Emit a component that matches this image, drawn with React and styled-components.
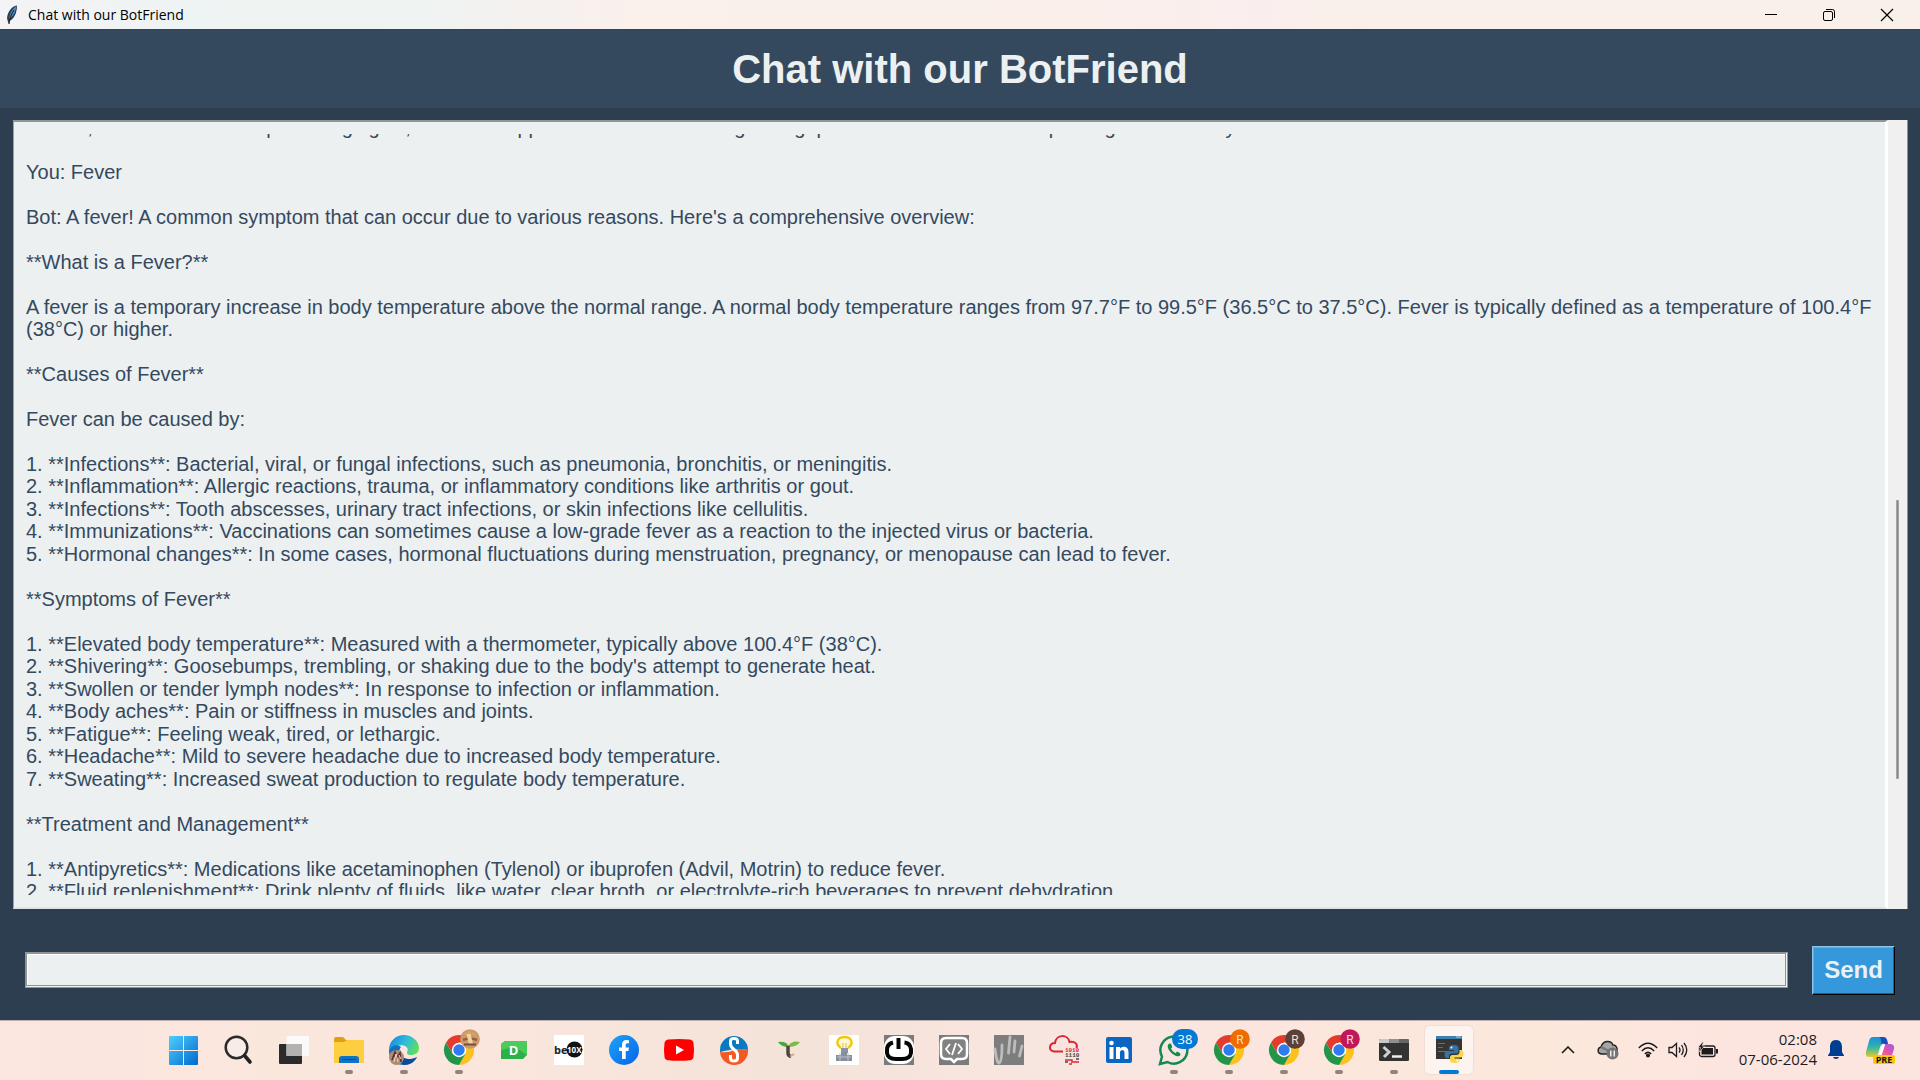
import React, { useLayoutEffect, useRef } from "react";
import styled, { createGlobalStyle, css } from "styled-components";

const GlobalStyle = createGlobalStyle`
  *, *::before, *::after { box-sizing: border-box; }
  body { margin: 0; background: #2c3e50; }
  button { border: 0; padding: 0; background: none; font: inherit; color: inherit; }
`;

const ui = '"Open Sans", "Noto Sans", sans-serif';
const arial = '"Liberation Sans", Arial, sans-serif';

const Desktop = styled.div`
  display: flex;
  flex-direction: column;
  height: 100vh;
  background: #2c3e50;
  font-family: ${arial};
`;

const TitleBar = styled.header`
  display: flex;
  align-items: center;
  height: 29px;
  flex: none;
  padding: 0 4px 0 6px;
  background: linear-gradient(90deg, #f4f3f5 0%, #eef3f3 10%, #eff3f2 22%, #faf0ec 33%, #faf0ea 52%, #faeeee 64%, #f9f0ea 72%, #f9f0ea 100%);
  color: #000;
  font-family: ${ui};
  font-size: 14px;
`;

const WindowName = styled.span`
  flex: 1;
  margin-left: 10px;
`;

const WindowButton = styled.button`
  display: grid;
  place-items: center;
  width: 58px;
  height: 29px;
`;

const Banner = styled.div`
  display: grid;
  place-items: center;
  flex: none;
  height: 79px;
  background: #34495e;
  border-top: 1px solid #2f4657;
`;

const BannerTitle = styled.h1`
  margin: 0;
  color: #ecf0f1;
  font-size: 40px;
  line-height: 46px;
  font-weight: bold;
`;

const ChatFrame = styled.main`
  display: flex;
  flex: 1;
  min-height: 0;
  margin: 12px 12px 0 13px;
  background: #ecf0f1;
`;

const ChatPane = styled.section`
  flex: 1;
  min-width: 0;
  padding: 12px;
  border: 2px solid #fff;
  border-width: 2px 3px 2px 1px;
  border-color: #8f9698 #fff #dfe3e4 #a0a0a0;
`;

const Log = styled.div`
  height: 100%;
  overflow-y: auto;
  scrollbar-width: none;
  color: #34495e;
  font-size: 20px;
  line-height: 22px;
`;

const Message = styled.p`
  margin: 0 0 23px;
`;

const List = styled.ul`
  margin: 0 0 23px;
  padding: 0;
  list-style: none;

  li:nth-child(even) { line-height: 23px; }
`;

const ScrollTrack = styled.div`
  display: flex;
  flex-direction: column;
  align-items: center;
  width: 20px;
  background: #f0f0f0;
  border-right: 1px solid #8a949c;

  &::before { content: ""; flex: 381; }
  &::after { content: ""; flex: 130; }
`;

const ScrollThumb = styled.div`
  flex: 278;
  width: 3px;
  border: 1px solid #a6a6a6;
  background: #858585;
`;

const Composer = styled.form`
  display: flex;
  align-items: center;
  gap: 24px;
  flex: none;
  padding: 37px 25px 25px;
`;

const MessageInput = styled.input`
  flex: 1;
  min-width: 0;
  height: 36px;
  margin-bottom: 2px;
  padding: 0 4px;
  border: 3px double #8f9496;
  border-width: 2px 3px 3px 2px;
  border-style: solid double double solid;
  border-radius: 0;
  background: #ecf0f1;
  color: #34495e;
  font-family: ${arial};
  font-size: 20px;
  outline: 0;
  box-shadow: inset 1px 1px 0 #fff;
`;

const SendButton = styled.button`
  width: 83px;
  height: 49px;
  padding-bottom: 2px;
  background: #3498db;
  border: 1px solid #000;
  border-color: #8cc4ec #000 #000 #8cc4ec;
  box-shadow: inset -1px -1px 0 #20608c, inset 1px 1px 0 #5bade3;
  color: #ecf0f1;
  font-family: ${arial};
  font-size: 24px;
  font-weight: bold;
`;

const Taskbar = styled.footer`
  display: flex;
  align-items: center;
  justify-content: space-between;
  flex: none;
  height: 60px;
  padding: 0 15px 2px 160px;
  border-top: 1px solid #bfb0ad;
  background: linear-gradient(90deg, #fbe6e0 0%, #fae7dc 15%, #fae6dd 25%, #f4e3d9 42%, #f7e5de 50%, #f9e5e1 60%, #fce6dd 68%, #fbe8db 80%, #fde5df 90%, #fde5df 100%);
  color: #1c1c1c;
  font-family: ${ui};
`;

const Apps = styled.nav`
  display: flex;
`;

const AppButton = styled.button`
  display: flex;
  flex-direction: column;
  align-items: center;
  width: 48px;
  height: 48px;
  margin-right: 7px;
  padding: 9px 0 0;
  border-radius: 5px;
  ${(p) => p.$active && css`background: #fdf4f0; box-shadow: 0 0 1px 1px #f0dfd8;`}

  svg { flex: none; overflow: visible; }

  &::after {
    content: "";
    width: ${(p) => (p.$active ? 20 : 8)}px;
    height: 4px;
    margin-top: 5px;
    border-radius: 2px;
    background: ${(p) => (p.$active ? "#0078d4" : p.$running ? "#8f8580" : "transparent")};
  }
`;

const Tray = styled.div`
  display: flex;
  align-items: center;
`;

const TrayButton = styled.button`
  display: grid;
  place-items: center;
  width: ${(p) => p.$w}px;
  height: 48px;
`;

const Clock = styled.time`
  width: 89px;
  padding-bottom: 2px;
  text-align: right;
  font-size: 15px;
  line-height: 20px;
`;

const Feather = () => (
  <svg width="12" height="20" viewBox="0 0 12 20">
    <path d="M11 .5C7 1 2 5 1 13l1 4 1 2 .5-3C8 14 11 8 11 .5Z" fill="#2d3b4a" />
    <path d="M10.500 1C7 3 4 7 3 14 7 12 9.500 7 10.500 1Z" fill="#4d8cc7" />
    <path d="M8 5C6 8 4 12 3 19" stroke="#0c1520" fill="none" />
  </svg>
);

const Pic = ({ children }) => (
  <svg width="30" height="30" viewBox="0 0 30 30" aria-hidden="true">{children}</svg>
);

const StartIcon = () => (
  <Pic>
    <defs>
      <linearGradient id="win" x1="0" y1="0" x2="30" y2="30" gradientUnits="userSpaceOnUse">
        <stop offset="0" stopColor="#4fd0ff" />
        <stop offset="1" stopColor="#0067cc" />
      </linearGradient>
    </defs>
    <path fill="url(#win)" d="M1 1H14V15H0V2A1 1 0 0 1 1 1ZM15 1H28A1 1 0 0 1 29 2V15H15ZM0 16H14V30H1A1 1 0 0 1 0 29ZM15 16H29V29A1 1 0 0 1 28 30H15Z" />
  </Pic>
);

const SearchIcon = () => (
  <Pic>
    <circle cx="12.500" cy="12.500" r="10.800" fill="#f8ece6" stroke="#2b2b2b" strokeWidth="2.500" />
    <path d="M20.500 20.500L26 27" stroke="#222" strokeWidth="3.600" strokeLinecap="round" />
  </Pic>
);

const TaskViewIcon = () => (
  <Pic>
    <rect x="0" y="9" width="23" height="20" rx="1" fill="#2b2b2b" />
    <rect x="7.500" y="1" width="22.500" height="20" rx="1" fill="#fbfafa" opacity=".96" />
    <rect x="7.500" y="9" width="15.500" height="12" fill="#b4b2b1" />
  </Pic>
);

const FolderIcon = () => (
  <Pic>
    <path d="M0 4A2 2 0 0 1 2 2H9L12 5H28A2 2 0 0 1 30 7V12H0Z" fill="#e0a010" />
    <path d="M0 7H10L13 5H28A2 2 0 0 1 30 7V28H0Z" fill="#fdce3f" />
    <path d="M5 28V24A3 3 0 0 1 8 21H22A3 3 0 0 1 25 24V28Z" fill="#0f73c6" />
    <path d="M8.500 24.500H21.500" stroke="#0a4a86" />
  </Pic>
);

const EdgeIcon = () => (
  <Pic>
    <defs>
      <linearGradient id="edge" x1="0" x2="1" y1=".2" y2=".6">
        <stop offset="0" stopColor="#1b86d6" />
        <stop offset=".5" stopColor="#2cbbe0" />
        <stop offset="1" stopColor="#5fe05a" />
      </linearGradient>
    </defs>
    <path d="M0 15C0 6 7 0 15 0S30 6 30 13C30 18 26 20 22 20 18 20 17.500 18 18.500 16 20 12 14 9 9 11 4 12 0 16 0 20Z" fill="url(#edge)" />
    <path d="M0 16C2 10 8 9 12 12 10 14 9 20 14 24 19 27.500 25 25 28 22 26 27 21 30 15 30 6 30 0 24 0 16Z" fill="#1470c0" />
    <path d="M12 15C11 22 17 27 28 22 25 27 20 30 15 30 10 28 8 20 12 15Z" fill="#0d4c94" />
    <circle cx="7.500" cy="22.500" r="7.500" fill="#b08a72" />
    <path d="M3 25L6 17 8 23 11 18 12 27M4 21H11" stroke="#5c2a3c" strokeWidth="1.500" fill="none" />
    <path d="M5 27L7 19 9 27M10 20L12 24" stroke="#f4e2b4" fill="none" />
  </Pic>
);

const ChromeIcon = ({ badge, letter }) => (
  <Pic>
    <path d="M2 7.500A15 15 0 0 1 28 7.500H15L8.500 18.750Z" fill="#e33b2e" />
    <path d="M28 7.500A15 15 0 0 1 15 30L21.500 18.750 15 7.500Z" fill="#fcc21b" />
    <path d="M15 30A15 15 0 0 1 2 7.500L8.500 18.750H21.500Z" fill="#239549" />
    <circle cx="15" cy="15" r="7.200" fill="#fff" />
    <circle cx="15" cy="15" r="5.700" fill="#2f7bf0" />
    <circle cx="26" cy="4" r="9.800" fill={badge} />
    {letter ? (
      <text x="26" y="8.500" textAnchor="middle" fontSize="12" fontFamily="Roboto, sans-serif" fill="#f3dfd2">{letter}</text>
    ) : (
      <g fill="none">
        <path d="M19 5Q26 2 33 5" stroke="#a05c38" strokeWidth="2.500" />
        <path d="M24-3L27 9" stroke="#efd3a0" strokeWidth="4" />
        <path d="M20-1Q26-4 32 0" stroke="#d6a25c" strokeWidth="2" />
        <path d="M20 9.500H32" stroke="#7d4c38" strokeWidth="2" />
      </g>
    )}
  </Pic>
);

const DIcon = () => (
  <Pic>
    <path d="M2 9L6 6H28V20L24 24H2Z" fill="#2cb14a" />
    <path d="M6 6H28V20L16 12 2 15V9Z" fill="#4acb5c" />
    <text x="14.500" y="19.500" textAnchor="middle" fontSize="13" fontWeight="bold" fontFamily="Open Sans, sans-serif" fill="#fff">D</text>
  </Pic>
);

const BeTenIcon = () => (
  <Pic>
    <rect width="30" height="30" fill="#fff" />
    <circle cx="20.500" cy="14.500" r="8" fill="#111" />
    <text x="0" y="18.500" fontSize="11" fontWeight="bold" fontFamily="Open Sans, sans-serif" fill="#222">be</text>
    <text x="13" y="18" fontSize="8" fontWeight="bold" fontFamily="Open Sans, sans-serif" fill="#fff">10X</text>
  </Pic>
);

const FacebookIcon = () => (
  <Pic>
    <defs>
      <linearGradient id="fb" x1="0" x2="1" y1="0" y2="1">
        <stop offset="0" stopColor="#1aa5fb" />
        <stop offset="1" stopColor="#0763e6" />
      </linearGradient>
    </defs>
    <circle cx="15" cy="15" r="15" fill="url(#fb)" />
    <path d="M13 24V16H10V12.500H13V10C13 6.500 15 5 17.500 5L20 5.200V8.300H18.500C17 8.300 16.700 9 16.700 10V12.500H20L19.400 16H16.700V24Z" fill="#fff" />
  </Pic>
);

const YouTubeIcon = () => (
  <Pic>
    <path d="M4 4.500Q15 3.500 26 4.500 29 5 29.500 8 30.500 15 29.500 22 29 25 26 25.300 15 26.300 4 25.300 1 25 .5 22-.5 15 .5 8 1 5 4 4.500Z" fill="#f00" />
    <path d="M12 10.500V19.500L20 15Z" fill="#fff" />
  </Pic>
);

const SIcon = () => (
  <Pic>
    <path d="M1 15A14 14 0 0 1 29 15Q20 12 1 17Z" fill="#0a79c0" />
    <path d="M1 17Q10 18 15 15 22 13 29 15A14 14 0 0 1 1 17Z" fill="#f15a24" />
    <path d="M18.500 9V6Q18.500 3.500 15 3.500T11.500 6V9Q11.500 12 15 14.500 18.500 17 18.500 20V23Q18.500 26 15 26T11.500 23V20" fill="none" stroke="#fff" strokeWidth="3" />
  </Pic>
);

const SproutIcon = () => (
  <Pic>
    <path d="M15 12Q13 6 4 7 7 12 15 12Z" fill="#45a842" />
    <path d="M14 11Q18 5 26 7 23 12 14 12Z" fill="#7dbb45" />
    <path d="M14 11V18Q14 21 17 21.500" stroke="#4d443f" strokeWidth="3.500" fill="none" />
    <path d="M16 21.500L20 19" stroke="#e0a070" strokeWidth="2" />
  </Pic>
);

const BulbIcon = () => (
  <Pic>
    <rect width="30" height="30" fill="#fff" />
    <path d="M12 13C6 9 8 2 15.500 2S25 9 19 13" fill="#fff8d0" stroke="#f0c818" strokeWidth="2.500" />
    <path d="M14 16V8M17 16V8" stroke="#d5bd60" />
    <rect x="12" y="13" width="7" height="5" fill="#8b93a2" />
    <path d="M7 20H12V17H18V20H23V26H7Z" fill="#878e9b" />
    <path d="M8 22H22M11 18V26M19 18V26" stroke="#bdc2ca" />
  </Pic>
);

const PowerIcon = () => (
  <Pic>
    <rect width="30" height="30" fill="#7b7b7b" />
    <rect x="0" y="1" width="30" height="28" rx="11" fill="#fff" />
    <path d="M9 7.500Q3 9 3 15V18Q4 24 12 24H18Q26 24 27 18V14Q26 8 20.500 7.500" fill="none" stroke="#050505" strokeWidth="4" />
    <path d="M14.500 3V14" stroke="#050505" strokeWidth="4" />
  </Pic>
);

const CodeIcon = () => (
  <Pic>
    <rect width="30" height="30" fill="#7b7b7b" />
    <path d="M7 3H23Q28 3 28 8V19Q28 24 23 24H18L15 27 12 24H7Q2 24 2 19V8Q2 3 7 3Z" fill="#828282" stroke="#fff" strokeWidth="2.500" />
    <path d="M11 9L7 14 11 19M19 9L23 14 19 19M17 8L13 20" fill="none" stroke="#fff" strokeWidth="1.800" />
  </Pic>
);

const HandIcon = () => (
  <Pic>
    <rect width="30" height="30" fill="#7d7d7d" />
    <path d="M1 14Q3 29 5 28 8 28 8 10M14.500 18L16 2M20 17L21 6M25.500 21L28 11" fill="none" stroke="#bcbcbc" strokeWidth="2.800" strokeLinecap="round" />
  </Pic>
);

const CloudIcon = () => (
  <Pic>
    <path d="M14 16.500H5C-1 16 0 8 6 8 7-1 19-1 20.500 7 26 6 29 9 27.500 13" fill="none" stroke="#db2530" strokeWidth="2" />
    <g fontFamily="Liberation Mono, monospace" fontWeight="bold" fontSize="6">
      <text x="16" y="17" fill="#db2530">10</text>
      <text x="23" y="17" fill="#db2530">10</text>
      <text x="16" y="22" fill="#444">1110</text>
    </g>
    <path d="M16 25H23V28M24 27H30M20 29H23" stroke="#db2530" strokeWidth="1.500" fill="none" />
    <path d="M16 27H19M27 24H30" stroke="#444" strokeWidth="1.500" />
  </Pic>
);

const LinkedInIcon = () => (
  <Pic>
    <rect x="2" y="2" width="26" height="26" rx="2" fill="#0b66c3" />
    <circle cx="7.500" cy="8" r="2.300" fill="#fff" />
    <path d="M5.500 12H9.500V24H5.500ZM12 12H16V13.700C18 10.800 24.500 10.800 24.500 17V24H20.500V17.500C20.500 14 16 14 16 17.500V24H12Z" fill="#fff" />
  </Pic>
);

const WhatsAppIcon = () => (
  <Pic>
    <path d="M1 29L3 21.500A13.500 13.500 0 1 1 8.500 27Z" fill="none" stroke="#158a50" strokeWidth="2.500" />
    <path d="M10.500 8.500C8 9.500 8 13 11.500 17 15 21 19.500 22.500 21.500 20L21 18 18 16.500 16.500 18.200Q13 16.500 12 13.500L13.300 12 12 8.800Z" fill="#158a50" />
    <rect x="13" y="-6" width="26" height="20" rx="10" fill="#0078d4" />
    <text x="26" y="9" textAnchor="middle" fontSize="13" fontFamily="Open Sans, sans-serif" fill="#fff">38</text>
  </Pic>
);

const TerminalIcon = () => (
  <Pic>
    <rect y="4" width="30" height="22" rx="1.500" fill="#333" />
    <path d="M0 8V5.500A1.500 1.500 0 0 1 1.500 4H10.500V8Z" fill="#c8c8c8" />
    <path d="M10.500 4H20V8H10.500Z" fill="#909090" />
    <path d="M20 4H28.500A1.500 1.500 0 0 1 30 5.500V8H20Z" fill="#666" />
    <path d="M4.500 12L10 17 5 22" fill="none" stroke="#cfcfcf" strokeWidth="3" />
    <path d="M13 21.500H23" stroke="#eee" strokeWidth="2.500" />
  </Pic>
);

const PythonIcon = () => (
  <Pic>
    <rect x="2" y="1" width="26" height="23" fill="#353535" />
    <path d="M2 1H28V4H2Z" fill="#3f7fae" />
    <path d="M22 2H27" stroke="#b7d3e6" />
    <path d="M4 8.500H11M4 12.500H9M4 16.500H13" stroke="#3f8d3f" />
    <path d="M19 10Q15 10 15 13V15H20V16H13Q10.500 16.500 10.500 20 10.500 23 13 23H15V21Q15 18.500 18 18.500H22Q24.500 18.500 24.500 16V13Q24.500 10 19 10Z" fill="#3574a8" />
    <path d="M21 28Q25.500 28 25.500 25.500V23.500H20.500V22.500H27Q29.500 22 29.500 18.500 29.500 15 27 15H25.500V17.500Q25 20 22 20H18.500Q16 20 16 22.500V25.500Q16 28 21 28Z" fill="#fbd54a" />
    <circle cx="17.500" cy="12.500" r="1" fill="#fff" />
    <circle cx="23.300" cy="25.600" r="1" fill="#fff" />
  </Pic>
);

const apps = [
  ["Start", StartIcon],
  ["Search", SearchIcon],
  ["Task view", TaskViewIcon],
  ["File Explorer", FolderIcon, { running: true }],
  ["Edge", EdgeIcon, { running: true }],
  ["Chrome", ChromeIcon, { running: true, badge: "#c99a6e" }],
  ["D", DIcon],
  ["be10x", BeTenIcon],
  ["Facebook", FacebookIcon],
  ["YouTube", YouTubeIcon],
  ["S", SIcon],
  ["Sprout", SproutIcon],
  ["Ideas", BulbIcon],
  ["Power", PowerIcon],
  ["Code chat", CodeIcon],
  ["Hand", HandIcon],
  ["Cloud", CloudIcon],
  ["LinkedIn", LinkedInIcon],
  ["WhatsApp", WhatsAppIcon, { running: true }],
  ["Chrome, orange profile", ChromeIcon, { running: true, badge: "#ef6c00", letter: "R" }],
  ["Chrome, brown profile", ChromeIcon, { running: true, badge: "#5d4037", letter: "R" }],
  ["Chrome, pink profile", ChromeIcon, { running: true, badge: "#c2185b", letter: "R" }],
  ["Terminal", TerminalIcon, { running: true }],
  ["Python", PythonIcon, { active: true }],
];

const log = [
  "Indeed, to make the whole plus bringing all, this is the approach which leads for gentle grip on all the matters which prolong the most day.",
  "You: Fever",
  "Bot: A fever! A common symptom that can occur due to various reasons. Here's a comprehensive overview:",
  "**What is a Fever?**",
  "A fever is a temporary increase in body temperature above the normal range. A normal body temperature ranges from 97.7°F to 99.5°F (36.5°C to 37.5°C). Fever is typically defined as a temperature of 100.4°F (38°C) or higher.",
  "**Causes of Fever**",
  "Fever can be caused by:",
  [
    "1. **Infections**: Bacterial, viral, or fungal infections, such as pneumonia, bronchitis, or meningitis.",
    "2. **Inflammation**: Allergic reactions, trauma, or inflammatory conditions like arthritis or gout.",
    "3. **Infections**: Tooth abscesses, urinary tract infections, or skin infections like cellulitis.",
    "4. **Immunizations**: Vaccinations can sometimes cause a low-grade fever as a reaction to the injected virus or bacteria.",
    "5. **Hormonal changes**: In some cases, hormonal fluctuations during menstruation, pregnancy, or menopause can lead to fever.",
  ],
  "**Symptoms of Fever**",
  [
    "1. **Elevated body temperature**: Measured with a thermometer, typically above 100.4°F (38°C).",
    "2. **Shivering**: Goosebumps, trembling, or shaking due to the body's attempt to generate heat.",
    "3. **Swollen or tender lymph nodes**: In response to infection or inflammation.",
    "4. **Body aches**: Pain or stiffness in muscles and joints.",
    "5. **Fatigue**: Feeling weak, tired, or lethargic.",
    "6. **Headache**: Mild to severe headache due to increased body temperature.",
    "7. **Sweating**: Increased sweat production to regulate body temperature.",
  ],
  "**Treatment and Management**",
  [
    "1. **Antipyretics**: Medications like acetaminophen (Tylenol) or ibuprofen (Advil, Motrin) to reduce fever.",
    "2. **Fluid replenishment**: Drink plenty of fluids, like water, clear broth, or electrolyte-rich beverages to prevent dehydration.",
  ],
];

function ChatLog() {
  const ref = useRef(null);
  useLayoutEffect(() => {
    ref.current.scrollTop = 18;
  }, []);
  return (
    <Log ref={ref}>
      {log.map((entry, i) =>
        Array.isArray(entry) ? (
          <List key={i}>{entry.map((line) => <li key={line}>{line}</li>)}</List>
        ) : (
          <Message key={i}>{entry}</Message>
        )
      )}
    </Log>
  );
}

export default function App() {
  return (
    <>
      <GlobalStyle />
      <Desktop>
        <TitleBar>
          <Feather />
          <WindowName>Chat with our BotFriend</WindowName>
          <WindowButton aria-label="Minimize">
            <svg width="14" height="14" viewBox="0 0 14 14"><path d="M1 6.500H13" stroke="#000" /></svg>
          </WindowButton>
          <WindowButton aria-label="Restore">
            <svg width="14" height="14" viewBox="0 0 14 14" fill="none" stroke="#000">
              <rect x="1.500" y="3.500" width="9" height="9" rx="1.500" />
              <path d="M4 1.500H10.500Q12.500 1.500 12.500 3.500V10" />
            </svg>
          </WindowButton>
          <WindowButton aria-label="Close">
            <svg width="14" height="14" viewBox="0 0 14 14"><path d="M1 1L13 13M13 1L1 13" stroke="#000" strokeWidth="1.200" /></svg>
          </WindowButton>
        </TitleBar>
        <Banner>
          <BannerTitle>Chat with our BotFriend</BannerTitle>
        </Banner>
        <ChatFrame>
          <ChatPane>
            <ChatLog />
          </ChatPane>
          <ScrollTrack>
            <ScrollThumb />
          </ScrollTrack>
        </ChatFrame>
        <Composer onSubmit={(e) => e.preventDefault()}>
          <MessageInput type="text" aria-label="Message" />
          <SendButton type="submit">Send</SendButton>
        </Composer>
        <Taskbar>
          <Apps>
            {apps.map(([name, Icon, opts = {}]) => (
              <AppButton key={name} aria-label={name} $running={opts.running} $active={opts.active}>
                <Icon badge={opts.badge} letter={opts.letter} />
              </AppButton>
            ))}
          </Apps>
          <Tray>
            <TrayButton $w={40} aria-label="Show hidden icons">
              <svg width="14" height="8" viewBox="0 0 14 8"><path d="M1 7L7 1 13 7" fill="none" stroke="#1c1c1c" strokeWidth="1.600" /></svg>
            </TrayButton>
            <TrayButton $w={40} aria-label="OneDrive paused">
              <svg width="22" height="20" viewBox="0 0 22 20">
                <path d="M5 14C0 14 0 8 4 7 6 0 14 0 16 5 20 5 22 11 18 14Z" fill="#a5a5a5" stroke="#222" strokeWidth="1.400" />
                <path d="M4 7L16 13" stroke="#777" strokeWidth="2" />
                <circle cx="15.500" cy="13.500" r="6" fill="#757575" />
                <path d="M13.800 10.500V16.500M17.200 10.500V16.500" stroke="#fff" strokeWidth="1.300" />
              </svg>
            </TrayButton>
            <TrayButton $w={40} aria-label="Wi-Fi">
              <svg width="20" height="16" viewBox="0 0 20 16" fill="none" stroke="#1c1c1c" strokeWidth="1.500">
                <path d="M.8 6Q10-3.500 19.200 6M3.800 9Q10 2.500 16.200 9M6.800 12Q10 8.500 13.200 12" />
                <circle cx="10" cy="13.500" r="1.300" fill="#1c1c1c" />
              </svg>
            </TrayButton>
            <TrayButton $w={20} aria-label="Volume">
              <svg width="20" height="16" viewBox="0 0 20 16" fill="none" stroke="#1c1c1c" strokeWidth="1.300">
                <path d="M1 5.500H4L8.500 1.500V14.500L4 10.500H1ZM11 5.500Q13 8 11 10.500M13.500 3Q17 8 13.500 13M16 1Q21.500 8 16 15" />
              </svg>
            </TrayButton>
            <TrayButton $w={40} aria-label="Battery charging">
              <svg width="20" height="16" viewBox="0 0 20 16">
                <rect x="1.500" y="4" width="15.500" height="10.500" rx="2" fill="none" stroke="#1c1c1c" strokeWidth="1.300" />
                <rect x="3.500" y="6" width="11.500" height="6.500" fill="#1c1c1c" />
                <path d="M18 7H20V11.500H18Z" fill="#1c1c1c" />
                <path d="M4.500 0L0 5.500H2.500L1.500 10 6.500 4H4L5.500 0Z" fill="#1c1c1c" stroke="#fbe8db" strokeWidth=".6" />
              </svg>
            </TrayButton>
            <Clock>02:08<br />07-06-2024</Clock>
            <TrayButton $w={38} aria-label="Notifications">
              <svg width="16" height="20" viewBox="0 0 16 20">
                <path d="M8 0C3.500 0 2 3.500 2 7V12L0 15.500V16H16V15.500L14 12V7C14 3.500 12.500 0 8 0Z" fill="#003e92" />
                <path d="M5 17H11Q10.500 19 8 19T5 17Z" fill="#003e92" />
              </svg>
            </TrayButton>
            <TrayButton $w={50} aria-label="Copilot preview">
              <svg width="30" height="30" viewBox="0 0 30 30">
                <defs>
                  <linearGradient id="cpa" x1="0" y1="0" x2="0" y2="1">
                    <stop offset="0" stopColor="#1c8de0" />
                    <stop offset=".5" stopColor="#2fb5a8" />
                    <stop offset="1" stopColor="#e8cb28" />
                  </linearGradient>
                  <linearGradient id="cpb" x1="1" y1="0" x2="0" y2="1">
                    <stop offset="0" stopColor="#9b5cf0" />
                    <stop offset=".5" stopColor="#e552a8" />
                    <stop offset="1" stopColor="#f58a4a" />
                  </linearGradient>
                </defs>
                <path d="M8 2H18Q21 2 22 5L23 9H19Q16 9 15 12L13 19Q12 22 9 22H3Q0 21 1 17L4 6Q5 2 8 2Z" fill="url(#cpa)" />
                <path d="M14 2H18Q21 2 22 5L23 9H16Q17 4 14 2Z" fill="#184fc0" />
                <path d="M19 9H26Q30 10 29 14L27 20Q26 22 24 22H12Q15 21 16 17Z" fill="url(#cpb)" />
                <path d="M19 9L15 21" stroke="#fff" strokeWidth="2.500" />
                <rect x="8" y="20" width="22" height="9" rx="2" fill="#fbc60c" />
                <text x="19" y="28" textAnchor="middle" fontSize="9" fontWeight="bold" fontFamily="Open Sans, sans-serif" fill="#111">PRE</text>
              </svg>
            </TrayButton>
          </Tray>
        </Taskbar>
      </Desktop>
    </>
  );
}
